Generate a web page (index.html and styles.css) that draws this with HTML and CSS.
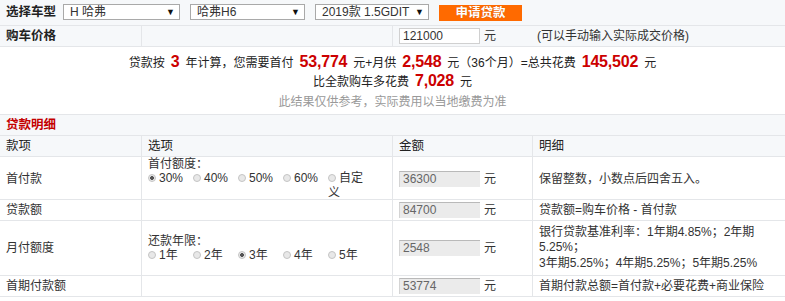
FILE: index.html
```html
<!DOCTYPE html>
<html lang="zh">
<head>
<meta charset="utf-8">
<link rel="stylesheet" href="styles.css">
</head>
<body>
<div class="calc">
  <div class="toprow">
    <span class="toplabel">选择车型</span>
    <div class="sel sel1"><span>H 哈弗</span><i>▼</i></div>
    <div class="sel sel2"><span>哈弗H6</span><i>▼</i></div>
    <div class="sel sel3"><span>2019款 1.5GDIT</span><i>▼</i></div>
    <div class="btn">申请贷款</div>
  </div>
  <div class="row price">
    <div class="cell b">购车价格</div>
    <div class="cell"></div>
    <div class="cell nob"><span class="inp white">121000</span><span class="yuan">元</span></div>
    <div class="cell note">(可以手动输入实际成交价格)</div>
  </div>
  <div class="summary">
    <p class="l1">贷款按<em class="n1">3</em>年计算，您需要首付<em>53,774</em>元+月供<em>2,548</em>元（36个月）=总共花费<em>145,502</em>元</p>
    <p class="l2">比全款购车多花费<em>7,028</em>元</p>
    <p class="l3">此结果仅供参考，实际费用以当地缴费为准</p>
  </div>
  <div class="sect">贷款明细</div>
  <div class="row head">
    <div class="cell">款项</div>
    <div class="cell">选项</div>
    <div class="cell">金额</div>
    <div class="cell">明细</div>
  </div>
  <div class="row r43">
    <div class="cell">首付款</div>
    <div class="cell opts">
      <div class="otitle">首付额度：</div>
      <div class="radios">
        <label class="rd"><i class="on"></i>30%</label>
        <label class="rd"><i></i>40%</label>
        <label class="rd"><i></i>50%</label>
        <label class="rd"><i></i>60%</label>
        <label class="rd narrow"><i></i>自定义</label>
      </div>
    </div>
    <div class="cell"><span class="inp">36300</span><span class="yuan">元</span></div>
    <div class="cell">保留整数，小数点后四舍五入。</div>
  </div>
  <div class="row">
    <div class="cell">贷款额</div>
    <div class="cell"></div>
    <div class="cell"><span class="inp">84700</span><span class="yuan">元</span></div>
    <div class="cell">贷款额=购车价格 - 首付款</div>
  </div>
  <div class="row r55">
    <div class="cell">月付额度</div>
    <div class="cell opts">
      <div class="otitle">还款年限：</div>
      <div class="radios">
        <label class="rd"><i></i>1年</label>
        <label class="rd"><i></i>2年</label>
        <label class="rd"><i class="on"></i>3年</label>
        <label class="rd"><i></i>4年</label>
        <label class="rd"><i></i>5年</label>
      </div>
    </div>
    <div class="cell"><span class="inp">2548</span><span class="yuan">元</span></div>
    <div class="cell multi">银行贷款基准利率：1年期4.85%；2年期5.25%；<br>3年期5.25%；4年期5.25%；5年期5.25%</div>
  </div>
  <div class="row">
    <div class="cell">首期付款额</div>
    <div class="cell"></div>
    <div class="cell"><span class="inp">53774</span><span class="yuan">元</span></div>
    <div class="cell">首期付款总额=首付款+必要花费+商业保险</div>
  </div>
</div>
</body>
</html>
```

FILE: styles.css
```css
* { box-sizing: border-box; }
html, body { margin: 0; padding: 0; background: #fff; }
body {
  font-family: "Liberation Sans", "Noto Sans CJK SC", sans-serif;
  font-size: 12px;
  color: #333;
}
.calc { width: 785px; }
.toprow {
  height: 26px;
  background: #f6f8fa;
  border-bottom: 1px solid #e4e6e9;
  display: flex;
  align-items: flex-start;
  padding: 4px 0 0 6px;
}
.toplabel {
  font-weight: bold;
  font-size: 12.5px;
  line-height: 16px;
  width: 57px;
  color: #222;
}
.sel {
  height: 16px;
  border: 1px solid #a9a9a9;
  background: #fff;
  display: flex;
  align-items: center;
  justify-content: space-between;
  padding: 0 4px 0 6px;
  line-height: 14px;
  color: #333;
  margin-right: 10px;
}
.sel i { font-style: normal; font-size: 9px; color: #111; }
.sel1 { width: 117px; }
.sel2 { width: 115px; }
.sel3 { width: 114px; margin-right: 10px; }
.btn {
  width: 83px;
  height: 16px;
  margin-top: 1px;
  background: #ff6a00;
  color: #fff;
  font-weight: bold;
  font-size: 12.5px;
  line-height: 16px;
  text-align: center;
  text-shadow: 0 0 1px rgba(120,40,0,.4);
}
.row {
  display: grid;
  grid-template-columns: 142px 251px 140px 1fr;
  height: 21px;
  border-bottom: 1px solid #e4e6e9;
}
.cell {
  border-right: 1px solid #e4e6e9;
  padding: 0 6px;
  display: flex;
  align-items: center;
  line-height: 15px;
  color: #333;
}
.cell:last-child { border-right: none; }
.cell.nob { border-right: none; }
.price { background: #f6f8fa; }
.price .cell.b { font-weight: bold; font-size: 12.5px; color: #222; }
.price .note { padding-left: 4px; }
.inp {
  display: inline-block;
  width: 81px;
  height: 16px;
  line-height: 15px;
  background: #ebebeb;
  border-top: 1px solid #b9b9b9;
  border-left: 1px solid #d4d4d4;
  padding-left: 3px;
  color: #666;
}
.inp.white {
  background: #fff;
  border: 1px solid #d0d0d0;
  color: #333;
}
.yuan { margin-left: 4px; color: #333; }
.summary {
  height: 68px;
  border-bottom: 1px solid #e4e6e9;
  text-align: center;
  padding-top: 5px;
}
.summary p { margin: 0; }
.summary .l1, .summary .l2 {
  height: 19px;
  line-height: 19px;
  color: #222;
}
.summary em {
  font-style: normal;
  font-weight: bold;
  font-size: 16px;
  color: #cc0000;
  margin: 0 6px;
  letter-spacing: -0.2px;
}
.summary .l3 {
  margin-top: 3px;
  line-height: 18px;
  color: #999;
}
.sect {
  height: 21px;
  background: #f6f8fa;
  border-bottom: 1px solid #e4e6e9;
  color: #c40000;
  font-weight: bold;
  font-size: 12.5px;
  line-height: 20px;
  padding-left: 6px;
}
.head { background: #f6f8fa; }
.head .cell { color: #222; font-size: 12.5px; }
.r43 { height: 43px; }
.r55 { height: 55px; }
.opts {
  flex-direction: column;
  align-items: flex-start;
  justify-content: center;
}
.otitle { line-height: 14px; }
.radios {
  display: flex;
  flex-wrap: nowrap;
  align-items: flex-start;
}
.rd {
  display: block;
  width: 45px;
  line-height: 15px;
  color: #333;
}
.rd.narrow { width: 38px; }
.rd i {
  display: inline-block;
  vertical-align: 0;
  width: 8px;
  height: 8px;
  margin-right: 3px;
  border-radius: 50%;
  border: 1px solid #c4c4c4;
  background: #e8e8e8;
}
.rd i.on {
  background: radial-gradient(circle, #555 0 1.6px, #e8e8e8 2.2px);
}
.multi { line-height: 15.5px; }
```
